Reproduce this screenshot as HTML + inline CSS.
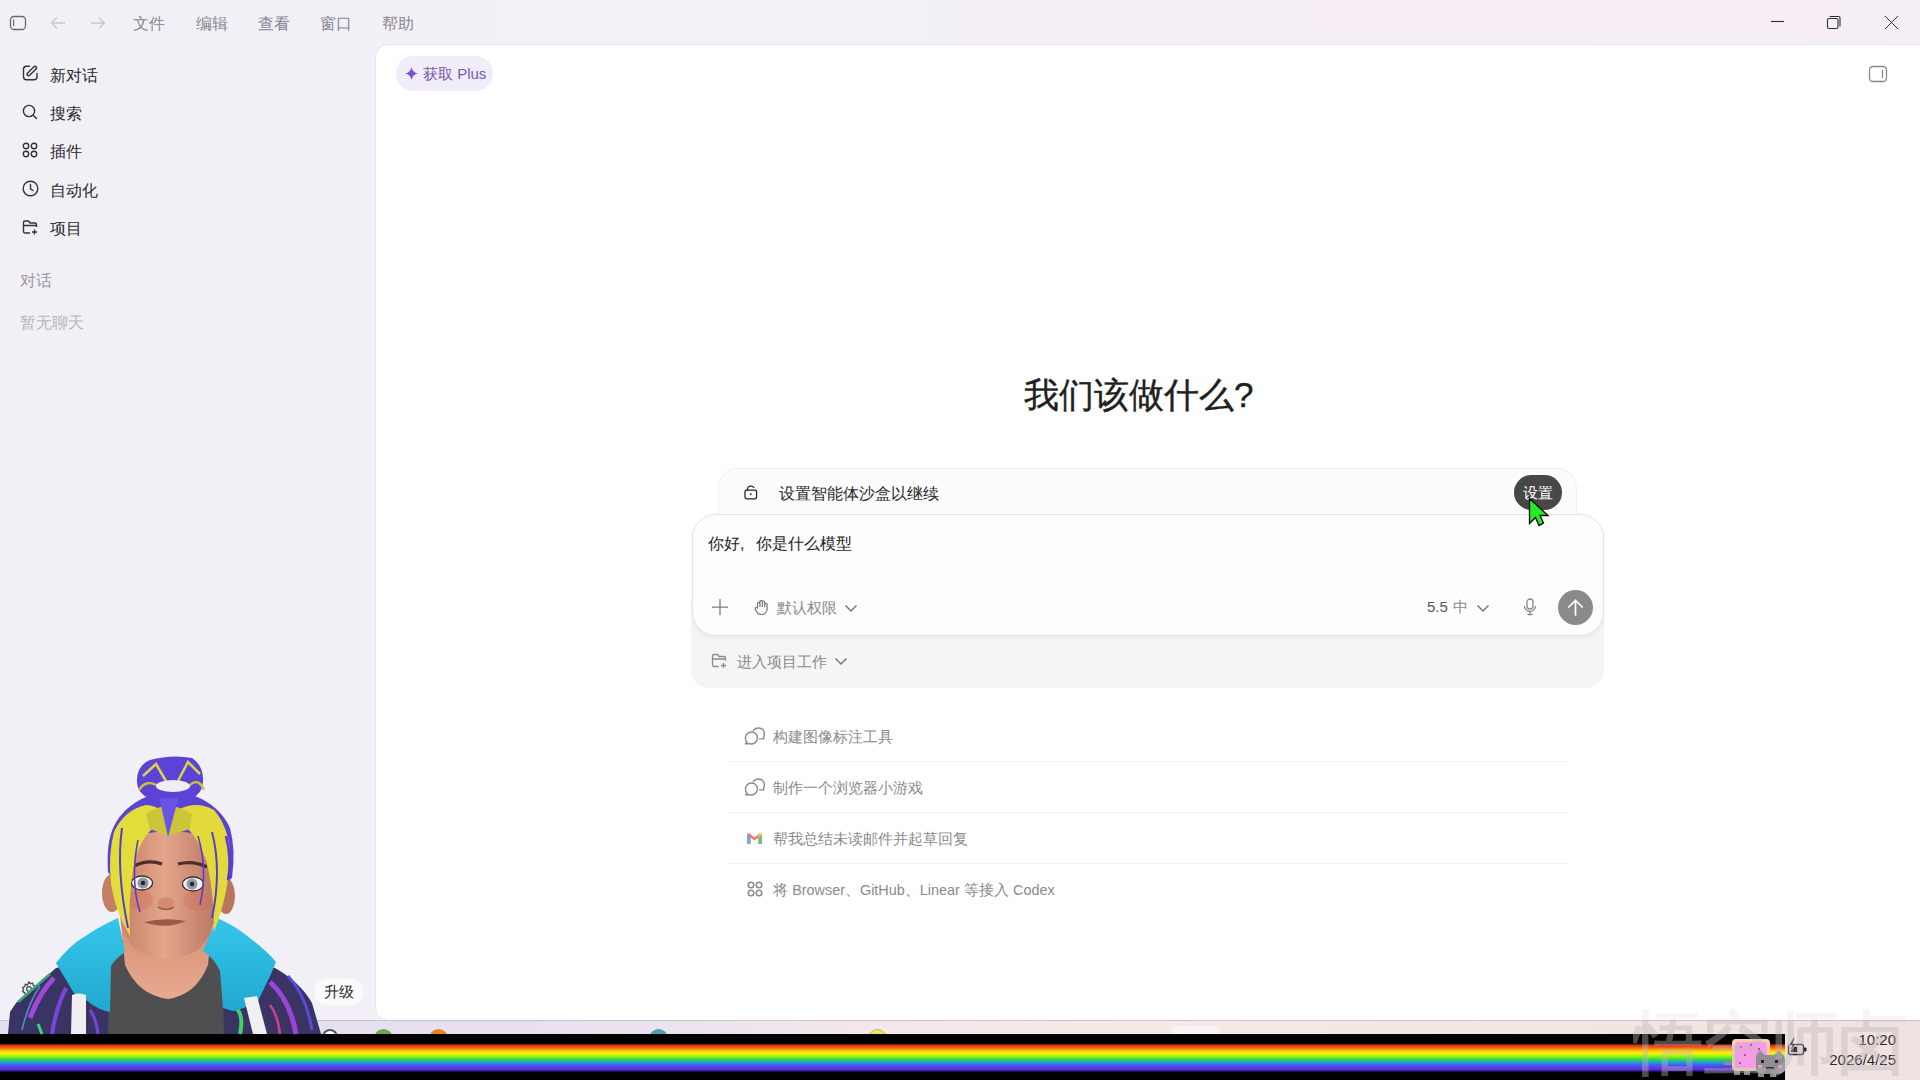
<!DOCTYPE html>
<html><head><meta charset="utf-8">
<style>
*{box-sizing:border-box;margin:0;padding:0}
html,body{width:1920px;height:1080px;overflow:hidden}
body{position:relative;font-family:"Liberation Sans",sans-serif;background:linear-gradient(90deg,#f2f0f7 0%,#f3f0f7 45%,#f6ecf5 75%,#f6eef6 100%);color:#2a2a2e}
.abs{position:absolute}
.menu{position:absolute;top:15px;font-size:16px;color:#8b8893;line-height:18px}
.side{position:absolute;left:50px;font-size:16px;color:#2c2b30;line-height:18px}
.sico{position:absolute;left:22px}
#card{position:absolute;left:375px;top:44px;width:1560px;height:977px;background:#fff;border:1px solid #e6e3ea;border-radius:13px 0 0 13px}
.sug{position:absolute;left:773px;font-size:15px;color:#8a8a8a;line-height:16px}
.div{position:absolute;left:728px;width:840px;height:1px;background:#efefef}
</style></head><body>

<!-- title bar icons -->
<svg class="abs" style="left:0;top:0" width="120" height="44">
 <rect x="10.5" y="16.5" width="15" height="13" rx="3.5" fill="none" stroke="#6b6a70" stroke-width="1.3"/>
 <line x1="13.6" y1="19.5" x2="13.6" y2="26" stroke="#6b6a70" stroke-width="1.2"/>
 <path d="M65 23H52M57 17.5L51.5 23L57 28.5" fill="none" stroke="#c9c6cd" stroke-width="1.3"/>
 <path d="M91 23H104M99 17.5L104.5 23L99 28.5" fill="none" stroke="#c9c6cd" stroke-width="1.3"/>
</svg>
<div class="menu" style="left:133px">文件</div>
<div class="menu" style="left:196px">编辑</div>
<div class="menu" style="left:258px">查看</div>
<div class="menu" style="left:320px">窗口</div>
<div class="menu" style="left:382px">帮助</div>

<!-- window controls -->
<svg class="abs" style="left:1740px;top:0" width="180" height="44">
 <line x1="31" y1="21.5" x2="44" y2="21.5" stroke="#2e2e32" stroke-width="1.1"/>
 <rect x="87.5" y="18.5" width="10.5" height="10" rx="1.5" fill="none" stroke="#2e2e32" stroke-width="1.1"/>
 <path d="M89.5 16.5H98.5a1.5 1.5 0 0 1 1.5 1.5V26.5" fill="none" stroke="#2e2e32" stroke-width="1.1"/>
 <path d="M145 16L158 29M158 16L145 29" stroke="#2e2e32" stroke-width="1"/>
</svg>

<!-- sidebar -->
<div id="sidebar">
 <svg class="sico" style="top:65px" width="16" height="16" viewBox="0 0 16 16"><path d="M7.5 1.3H4.5a3 3 0 0 0-3 3v7.5a3 3 0 0 0 3 3h7.5a3 3 0 0 0 3-3V8.5" fill="none" stroke="#333" stroke-width="1.4" stroke-linecap="round"/><line x1="6.6" y1="9.3" x2="13" y2="2.9" stroke="#333" stroke-width="4.4" stroke-linecap="round"/><line x1="6.6" y1="9.3" x2="13" y2="2.9" stroke="#f2f0f7" stroke-width="1.6" stroke-linecap="round"/></svg>
 <div class="side" style="top:67px">新对话</div>
 <svg class="sico" style="top:104px" width="16" height="16" viewBox="0 0 16 16"><circle cx="7" cy="7" r="5.6" fill="none" stroke="#333" stroke-width="1.4"/><path d="M11.2 11.2L14.5 14.5" stroke="#333" stroke-width="1.4" stroke-linecap="round"/></svg>
 <div class="side" style="top:105px">搜索</div>
 <svg class="sico" style="top:142px" width="16" height="16" viewBox="0 0 16 16"><circle cx="4" cy="4" r="2.7" fill="none" stroke="#333" stroke-width="1.4"/><circle cx="12" cy="4" r="2.7" fill="none" stroke="#333" stroke-width="1.4"/><circle cx="4" cy="12" r="2.7" fill="none" stroke="#333" stroke-width="1.4"/><circle cx="12" cy="12" r="2.7" fill="none" stroke="#333" stroke-width="1.4"/></svg>
 <div class="side" style="top:143px">插件</div>
 <svg class="sico" style="top:180px" width="17" height="17" viewBox="0 0 17 17"><circle cx="8.5" cy="8.5" r="7.3" fill="none" stroke="#333" stroke-width="1.4"/><path d="M8.5 4.5V8.8L11 10.5" fill="none" stroke="#333" stroke-width="1.4" stroke-linecap="round"/></svg>
 <div class="side" style="top:182px">自动化</div>
 <svg class="sico" style="top:219px" width="17" height="17" viewBox="0 0 17 17"><path d="M8 14H3a1.5 1.5 0 0 1-1.5-1.5v-9A1.5 1.5 0 0 1 3 2h3.5l1.5 2h5a1.5 1.5 0 0 1 1.5 1.5V8M1.5 6.5H14.5" fill="none" stroke="#333" stroke-width="1.4" stroke-linejoin="round"/><path d="M12.5 10.5v5M10 13h5" stroke="#333" stroke-width="1.4"/></svg>
 <div class="side" style="top:220px">项目</div>
 <div class="side" style="left:20px;top:272px;color:#9b98a0">对话</div>
 <div class="side" style="left:20px;top:314px;color:#b8b5bc">暂无聊天</div>
</div>

<!-- main card -->
<div id="card"></div>

<!-- plus badge -->
<div class="abs" style="left:396px;top:56px;width:97px;height:35px;border-radius:18px;background:#f1ecfa"></div>
<svg class="abs" style="left:405px;top:67px" width="13" height="13" viewBox="0 0 13 13"><path d="M6.5 0.3Q7.6 5.4 12.7 6.5Q7.6 7.6 6.5 12.7Q5.4 7.6 0.3 6.5Q5.4 5.4 6.5 0.3Z" fill="#7b52c9"/></svg>
<div class="abs" style="left:423px;top:66px;font-size:15px;line-height:16px;color:#7659a8">获取 Plus</div>
<!-- right panel icon -->
<svg class="abs" style="left:1868px;top:65px" width="20" height="18"><rect x="1.5" y="1.5" width="17" height="15" rx="3.5" fill="none" stroke="#8a8a8a" stroke-width="1.3"/><line x1="14.5" y1="5" x2="14.5" y2="13" stroke="#8a8a8a" stroke-width="1.3"/></svg>

<div class="abs" style="left:1024px;top:375px;font-size:35px;line-height:40px;color:#1f1f1f;-webkit-text-stroke:0.4px #1f1f1f">我们该做什么?</div>

<!-- outer grey container -->
<div class="abs" style="left:691px;top:600px;width:913px;height:88px;border-radius:0 0 18px 18px;background:#f5f5f5"></div>
<!-- banner -->
<div class="abs" style="left:718px;top:468px;width:859px;height:60px;border-radius:20px 20px 0 0;background:#fcfcfc;border:1px solid #f1f1f1;border-bottom:none"></div>
<svg class="abs" style="left:743px;top:485px" width="15" height="15" viewBox="0 0 15 15"><rect x="2" y="5.2" width="11.6" height="8.6" rx="2" fill="none" stroke="#222" stroke-width="1.25"/><path d="M4.3 5.2Q4.4 1.1 7.8 1.1Q9.7 1.1 10.8 2.4" fill="none" stroke="#222" stroke-width="1.25" stroke-linecap="round"/><ellipse cx="7.8" cy="9.2" rx=".75" ry="1.1" fill="#222"/></svg>
<div class="abs" style="left:779px;top:485px;font-size:16px;line-height:18px;color:#2a2a2a">设置智能体沙盒以继续</div>
<div class="abs" style="left:1514px;top:475px;width:48px;height:35px;border-radius:18px;background:#474747;color:#fff;font-size:15px;line-height:35px;text-align:center">设置</div>
<!-- input -->

<div class="abs" style="left:692px;top:514px;width:912px;height:122px;border-radius:24px;background:#fdfdfd;border:1px solid #e4e4e4;box-shadow:0 2px 4px rgba(0,0,0,0.05)"></div>
<div class="abs" style="left:708px;top:535px;font-size:16px;line-height:18px;color:#242424">你好<span style="display:inline-block;width:16px">,</span>你是什么模型</div>
<svg class="abs" style="left:711px;top:598px" width="18" height="18"><path d="M9 1V17M1 9H17" stroke="#7a7a7a" stroke-width="1.25"/></svg>
<svg class="abs" style="left:754px;top:599px" width="15" height="16" viewBox="0 0 15 16"><path d="M3.5 9V4.5a1.2 1.2 0 0 1 2.4 0V7.5V2.5a1.2 1.2 0 0 1 2.4 0V7.5V3.2a1.2 1.2 0 0 1 2.4 0V7.8V5.5a1.2 1.2 0 0 1 2.4 0V10a5.5 5.5 0 0 1-5.5 5.5h-.5A5 5 0 0 1 2.5 12.5L1.2 10a1.3 1.3 0 0 1 2.3-1z" fill="none" stroke="#777" stroke-width="1.2" stroke-linejoin="round"/></svg>
<div class="abs" style="left:777px;top:600px;font-size:15px;line-height:16px;color:#8a8a8a">默认权限</div>
<svg class="abs" style="left:844px;top:603px" width="14" height="10"><path d="M1.5 2.5L7 8L12.5 2.5" fill="none" stroke="#777" stroke-width="1.5"/></svg>
<div class="abs" style="left:1427px;top:599px;font-size:15px;line-height:16px;color:#555">5.5</div>
<div class="abs" style="left:1453px;top:599px;font-size:15px;line-height:16px;color:#888">中</div>
<svg class="abs" style="left:1476px;top:603px" width="14" height="10"><path d="M1.5 2.5L7 8L12.5 2.5" fill="none" stroke="#777" stroke-width="1.5"/></svg>
<svg class="abs" style="left:1522px;top:598px" width="16" height="18" viewBox="0 0 16 18"><rect x="5" y="1" width="6" height="10" rx="3" fill="none" stroke="#888" stroke-width="1.3"/><path d="M2.5 8a5.5 5.5 0 0 0 11 0M8 13.5V16.5M5.5 16.5H10.5" fill="none" stroke="#888" stroke-width="1.3"/></svg>
<div class="abs" style="left:1558px;top:590px;width:35px;height:35px;border-radius:50%;background:#8a8a8a"></div>
<svg class="abs" style="left:1558px;top:590px" width="35" height="35"><path d="M17.5 25V10M10.8 17L17.5 10.3L24.2 17" fill="none" stroke="#fff" stroke-width="1.7" stroke-linecap="round" stroke-linejoin="round"/></svg>
<!-- project row -->
<svg class="abs" style="left:711px;top:653px" width="17" height="16" viewBox="0 0 17 16"><path d="M7.5 13.5H3a1.5 1.5 0 0 1-1.5-1.5V3A1.5 1.5 0 0 1 3 1.5h3.5l1.5 2h5a1.5 1.5 0 0 1 1.5 1.5V7.5M1.5 6H14.5" fill="none" stroke="#8a8a8a" stroke-width="1.3" stroke-linejoin="round"/><path d="M12.5 10v5M10 12.5h5" stroke="#8a8a8a" stroke-width="1.3"/></svg>
<div class="abs" style="left:737px;top:654px;font-size:15px;line-height:16px;color:#8a8a8a">进入项目工作</div>
<svg class="abs" style="left:834px;top:656px" width="14" height="10"><path d="M1.5 2.5L7 8L12.5 2.5" fill="none" stroke="#777" stroke-width="1.5"/></svg>

<!-- suggestions -->
<svg class="abs" style="left:744px;top:726px" width="22" height="19" viewBox="0 0 22 19"><path d="M3.16 16.24A6 6 0 1 1 5.35 17.64L1.6 17.8Z" fill="none" stroke="#8a8a8a" stroke-width="1.4" stroke-linejoin="round"/><path d="M9.3 4.3Q12 1.9 15 2Q20.3 2.6 20.4 8Q20.4 10 19.6 11L19.8 12.9L15.4 12.9" fill="none" stroke="#8a8a8a" stroke-width="1.4" stroke-linecap="round" stroke-linejoin="round"/></svg>
<div class="sug" style="top:729px">构建图像标注工具</div>
<div class="div" style="top:761px"></div>
<svg class="abs" style="left:744px;top:777px" width="22" height="19" viewBox="0 0 22 19"><path d="M3.16 16.24A6 6 0 1 1 5.35 17.64L1.6 17.8Z" fill="none" stroke="#8a8a8a" stroke-width="1.4" stroke-linejoin="round"/><path d="M9.3 4.3Q12 1.9 15 2Q20.3 2.6 20.4 8Q20.4 10 19.6 11L19.8 12.9L15.4 12.9" fill="none" stroke="#8a8a8a" stroke-width="1.4" stroke-linecap="round" stroke-linejoin="round"/></svg>
<div class="sug" style="top:780px">制作一个浏览器小游戏</div>
<div class="div" style="top:812px"></div>
<svg class="abs" style="left:746px;top:831px;opacity:.72" width="17" height="14" viewBox="0 0 17 14"><path d="M1 13V3.5L3 2L8.5 6.5L14 2L16 3.5V13H12.5V6.5L8.5 9.5L4.5 6.5V13Z" fill="#ea4335"/><path d="M1 3.5V13H4.5V6.5Z" fill="#4285f4"/><path d="M12.5 6.5V13H16V3.5Z" fill="#34a853"/><path d="M14 2L16 3.5L12.5 6.5V4.2Z" fill="#fbbc04"/></svg>
<div class="sug" style="top:831px">帮我总结未读邮件并起草回复</div>
<div class="div" style="top:863px"></div>
<svg class="abs" style="left:747px;top:881px" width="16" height="16" viewBox="0 0 16 16"><circle cx="4" cy="4" r="2.8" fill="none" stroke="#8a8a8a" stroke-width="1.5"/><circle cx="12" cy="4" r="2.8" fill="none" stroke="#8a8a8a" stroke-width="1.5"/><circle cx="4" cy="12" r="2.8" fill="none" stroke="#8a8a8a" stroke-width="1.5"/><circle cx="12" cy="12" r="2.8" fill="none" stroke="#8a8a8a" stroke-width="1.5"/></svg>
<div class="sug" style="top:882px">将 <span style="font-size:14.4px">Browser</span>、<span style="font-size:14.4px">GitHub</span>、<span style="font-size:14.4px">Linear</span> 等接入 <span style="font-size:14.4px">Codex</span></div>



<!-- upgrade pill + gear -->
<svg class="abs" style="left:20px;top:980px" width="18" height="18" viewBox="0 0 18 18"><path d="M9 2l1.5 1.7 2.2-.5.5 2.2 2.1.9-.9 2.1.9 2.1-2.1.9-.5 2.2-2.2-.5L9 16l-1.5-1.7-2.2.5-.5-2.2-2.1-.9.9-2.1-.9-2.1 2.1-.9.5-2.2 2.2.5z" fill="none" stroke="#444" stroke-width="1.3"/><circle cx="9" cy="9" r="2.3" fill="none" stroke="#444" stroke-width="1.3"/></svg>
<div class="abs" style="left:314px;top:979px;width:49px;height:26px;border-radius:13px;background:#fbfbfd;font-size:15px;line-height:26px;text-align:center;color:#2a2a2a">升级</div>
<!-- avatar -->
<svg class="abs" style="left:0;top:740px;z-index:5" width="380" height="295" viewBox="0 740 380 295">
 <defs>
  <linearGradient id="skin" x1="0" y1="0" x2="1" y2="0"><stop offset="0" stop-color="#c58066"/><stop offset=".45" stop-color="#e3a68a"/><stop offset="1" stop-color="#b87560"/></linearGradient>
  <linearGradient id="neck" x1="0" y1="0" x2="0" y2="1"><stop offset="0" stop-color="#b87560"/><stop offset=".35" stop-color="#d9957a"/><stop offset="1" stop-color="#e8ab90"/></linearGradient>
  <linearGradient id="hood" x1="0" y1="0" x2="0" y2="1"><stop offset="0" stop-color="#35c6ea"/><stop offset="1" stop-color="#22a8d0"/></linearGradient>
 </defs>
 <!-- jacket -->
 <path d="M8 1034 L10 1012 L16 1003 L56 968 L110 956 L222 956 L275 968 Q300 982 312 1003 L321 1034 Z" fill="#3a3464"/>
 <path d="M18 1002 L50 974" stroke="#3aa878" stroke-width="2.5" fill="none"/>
 <path d="M54 978 Q40 992 30 1018" stroke="#a046d8" stroke-width="5" fill="none"/>
 <path d="M66 988 Q56 1008 52 1034" stroke="#7a46d8" stroke-width="4" fill="none"/>
 <path d="M40 986 Q28 1004 22 1030" stroke="#4a8ec8" stroke-width="1.6" fill="none"/>
 <path d="M38 1024 L42 1034" stroke="#40d080" stroke-width="3" fill="none"/>
 <path d="M98 1034 Q96 1018 90 1010" stroke="#7a45d0" stroke-width="3" fill="none"/>
 <path d="M296 1034 Q290 1000 270 982" stroke="#9b45d8" stroke-width="5" fill="none"/>
 <path d="M312 1030 Q306 995 288 976" stroke="#5a4ad8" stroke-width="3" fill="none"/>
 <path d="M240 1034 Q244 1015 236 1008" stroke="#3fd26a" stroke-width="4" fill="none"/>
 <path d="M280 1034 Q278 1015 270 1005" stroke="#d04090" stroke-width="2.5" fill="none"/>
 <!-- shirt -->
 <path d="M108 1034 L110 950 L120 940 L212 940 L222 950 L224 1034 Z" fill="#4f4f51"/>
 <!-- neck -->
 <path d="M119 905 L214 905 L208 965 Q196 995 168 999 Q138 995 125 965 Z" fill="url(#neck)"/>
 <!-- hood collar -->
 <path d="M56 963 Q70 945 84 937 Q100 926 118 918 L125 952 Q114 960 111 966 L110 1012 Q98 1010 86 1000 L75 995 Z" fill="url(#hood)"/>
 <path d="M217 918 Q236 926 251 939 Q266 950 276 962 L271 974 L258 1001 Q246 1008 233 1011 L223 1008 L220 971 Q214 958 203 951 Z" fill="url(#hood)"/>
 <!-- drawstrings -->
 <path d="M72 995 Q79 992 86 995 L86 1034 L71 1034 Z" fill="#efeff1"/>
 <path d="M244 998 L257 996 L267 1034 L253 1034 Z" fill="#f0f0f2"/>
 <!-- ears -->
 <ellipse cx="112" cy="893" rx="10" ry="19" fill="#c47e64"/>
 <ellipse cx="226" cy="896" rx="9" ry="18" fill="#b97560"/>
 <!-- face -->
 <path d="M121 850 Q122 828 168 826 Q216 828 219 850 L218 905 Q214 935 198 950 Q182 959 165 959 Q148 959 134 948 Q122 934 120 905 Z" fill="url(#skin)"/>
 <ellipse cx="140" cy="900" rx="13" ry="10" fill="#d06a5e" opacity=".35"/>
 <ellipse cx="197" cy="901" rx="13" ry="10" fill="#d06a5e" opacity=".35"/>
 <!-- eyebrows -->
 <path d="M134 866 Q148 859 162 864" stroke="#4e3028" stroke-width="3.2" fill="none"/>
 <path d="M178 864 Q193 860 207 867" stroke="#4e3028" stroke-width="3.2" fill="none"/>
 <!-- eyes -->
 <ellipse cx="142" cy="883" rx="10.5" ry="7" fill="#f2f2f2" stroke="#4a2e2e" stroke-width="1.3"/>
 <circle cx="143" cy="883" r="5.5" fill="#8c9aa4"/><circle cx="143" cy="883" r="2.2" fill="#222"/>
 <ellipse cx="193" cy="884" rx="10.5" ry="7" fill="#f2f2f2" stroke="#4a2e2e" stroke-width="1.3"/>
 <circle cx="192" cy="884" r="5.5" fill="#8c9aa4"/><circle cx="192" cy="884" r="2.2" fill="#222"/>
 <!-- nose, mouth -->
 <ellipse cx="166" cy="903" rx="8" ry="6" fill="#d48a72"/>
 <path d="M158 907 Q166 912 174 907" stroke="#9a5a4a" stroke-width="1.5" fill="none"/>
 <path d="M144 922 Q165 917 186 921 Q166 930 144 922 Z" fill="#9a5a48"/>
 <!-- hair outer purple -->
 <path d="M108 872 Q106 842 114 826 Q124 806 148 796 Q170 790 195 796 Q220 806 230 828 Q236 850 232 878 L224 884 Q222 850 212 836 L170 830 L128 836 Q120 852 118 885 Z" fill="#5b43d4"/>
 <!-- yellow fringes -->
 <path d="M114 832 Q124 810 146 805 Q158 806 162 812 L152 829 Q138 842 133 870 Q128 900 130 936 Q116 914 111 884 Q108 855 114 832 Z" fill="#e3dd3c"/>
 <path d="M178 810 Q196 800 214 810 Q228 826 230 852 Q230 890 214 932 Q214 890 206 860 Q198 838 188 829 Z" fill="#e1da3a"/>
 <path d="M146 814 Q168 798 192 814 L190 829 L168 836 L150 829 Z" fill="#cbc53a"/>
 <path d="M158 792 L180 792 L168 837 Z" fill="#6b52e6"/>
 <path d="M122 828 Q116 870 128 928" stroke="#5a3cc8" stroke-width="2" fill="none"/>
 <path d="M138 840 Q130 880 140 912" stroke="#5a3cc8" stroke-width="1.6" fill="none"/>
 <path d="M212 832 Q222 870 212 918" stroke="#5a3cc8" stroke-width="2" fill="none"/>
 <path d="M198 836 Q208 870 200 905" stroke="#5a3cc8" stroke-width="1.6" fill="none"/>
 <path d="M226 836 Q232 860 228 880" stroke="#5a3cc8" stroke-width="2.5" fill="none"/>
 <!-- bun -->
 <path d="M137 782 Q136 766 150 760 Q172 754 192 758 Q204 766 203 782 Q202 794 192 798 L148 798 Q137 792 137 782 Z" fill="#5c42d6"/>
 <path d="M143 776 L156 764 L166 781 M178 781 L188 762 L200 774" stroke="#d8d24a" stroke-width="2.6" fill="none"/>
 <path d="M139 790 Q146 778 160 787" stroke="#c8c440" stroke-width="2.4" fill="none"/>
 <path d="M188 787 Q198 776 204 790" stroke="#c8c440" stroke-width="2.4" fill="none"/>
 <ellipse cx="173" cy="786" rx="17" ry="6" fill="#eeeef4"/>
</svg>
<!-- taskbar -->
<div class="abs" style="left:0;top:1020px;width:1920px;height:60px;background:linear-gradient(90deg,#e4def0 0%,#e8e0f0 28%,#f4e8ec 45%,#f7e9e6 60%,#f3e5e3 85%,#efe1e1 100%);border-top:1px solid #c9c4cb"></div>
<div class="abs" style="left:374px;top:1029px;width:19px;height:19px;border-radius:50%;background:#6aa84f"></div>
<div class="abs" style="left:429px;top:1029px;width:19px;height:19px;border-radius:50%;background:#e8821e"></div>
<div class="abs" style="left:649px;top:1029px;width:19px;height:19px;border-radius:50%;background:#4ba3a8"></div>
<div class="abs" style="left:868px;top:1029px;width:19px;height:19px;border-radius:50%;background:#e8e070;border:1px solid #c8b84a"></div>
<div class="abs" style="left:1172px;top:1026px;width:48px;height:20px;border-radius:4px;background:#fbf3f3"></div>
<div class="abs" style="left:322px;top:1029px;width:16px;height:16px;border-radius:50%;background:#fff;border:2px solid #556"></div>
<!-- rainbow band -->
<div class="abs" style="left:0;top:1034px;width:1785px;height:46px;background:linear-gradient(180deg,#000 0px,#000 9px,#2a0500 10px,#c7331a 11px,#f04e1b 13px,#f88d10 15px,#ffc90a 17px,#fff10a 19px,#c9f40a 21px,#7ef218 23px,#3fd93a 25px,#22b89a 27px,#2b8fd8 29px,#3d64ea 31px,#5a3df0 33px,#5b35e8 35px,#31188a 37px,#050210 38px,#000 40px)"></div>
<!-- nyan cat -->
<svg class="abs" style="left:1720px;top:1036px" width="66" height="44" viewBox="0 0 66 44">
 <rect x="4" y="25" width="10" height="4" fill="#8a8a8e"/>
 <rect x="12" y="3" width="38" height="32" rx="4" fill="#f6d3a6"/>
 <rect x="15" y="6" width="32" height="26" rx="3" fill="#f59ce8"/>
 <rect x="20" y="10" width="2" height="2" fill="#d0409a"/><rect x="30" y="8" width="2" height="2" fill="#d0409a"/><rect x="24" y="18" width="2" height="2" fill="#d0409a"/><rect x="19" y="26" width="2" height="2" fill="#d0409a"/><rect x="38" y="12" width="2" height="2" fill="#d0409a"/>
 <path d="M36 20 L40 14 L45 19 L54 19 L59 14 L64 20 L65 34 Q63 38 58 38 L42 38 Q37 38 36 34 Z" fill="#8f8f93"/>
 <rect x="41" y="24" width="3" height="3" fill="#222"/><rect x="55" y="24" width="3" height="3" fill="#222"/>
 <rect x="38" y="29" width="4" height="3" fill="#f4a0a8"/><rect x="58" y="29" width="4" height="3" fill="#f4a0a8"/>
 <rect x="46" y="31" width="8" height="1.5" fill="#333"/>
 <rect x="14" y="35" width="6" height="4" fill="#8a8a8e"/><rect x="24" y="35" width="6" height="4" fill="#8a8a8e"/><rect x="38" y="37" width="6" height="4" fill="#8a8a8e"/><rect x="50" y="37" width="6" height="4" fill="#8a8a8e"/>
</svg>
<!-- tray -->
<svg class="abs" style="left:1784px;top:1036px" width="26" height="22" viewBox="0 0 26 22"><rect x="4.5" y="8.5" width="15" height="10" rx="2" fill="none" stroke="#262626" stroke-width="1.4"/><rect x="20" y="11.5" width="2.5" height="4" rx=".8" fill="#262626"/><rect x="6.8" y="10.8" width="6.5" height="5.4" fill="#3a3a3a"/><path d="M9.5 1.5L4.5 9.5H8L6 15L12.5 7.5H9L11 1.5Z" fill="#262626" stroke="#f2e5e4" stroke-width=".8"/></svg>
<div class="abs" style="left:1820px;top:1031px;width:76px;text-align:right;font-size:15px;line-height:17px;color:#2a2a2a">10:20</div>
<div class="abs" style="left:1780px;top:1051px;width:116px;text-align:right;font-size:15px;line-height:17px;color:#2a2a2a">2026/4/25</div>
<!-- watermark -->
<div class="abs" style="left:1633px;top:1003px;font-size:70px;line-height:80px;color:#bdb8b8;-webkit-text-stroke:1.5px #bdb8b8;opacity:.4;letter-spacing:-2px;white-space:nowrap;-webkit-mask-image:linear-gradient(180deg,rgba(0,0,0,.35) 0px,rgba(0,0,0,.35) 17px,#000 18px)">悟空师卤</div>
<svg class="abs" style="left:1520px;top:490px;z-index:20" width="40" height="45" viewBox="1520 490 40 45"><path d="M1529.5 498.5L1529.5 523.5L1535.5 517.5L1539 525.5L1543.5 523L1540 515.5L1548 515.5Z" fill="#22ee22" stroke="#000" stroke-width="1.3" stroke-linejoin="miter"/></svg>
</body></html>
